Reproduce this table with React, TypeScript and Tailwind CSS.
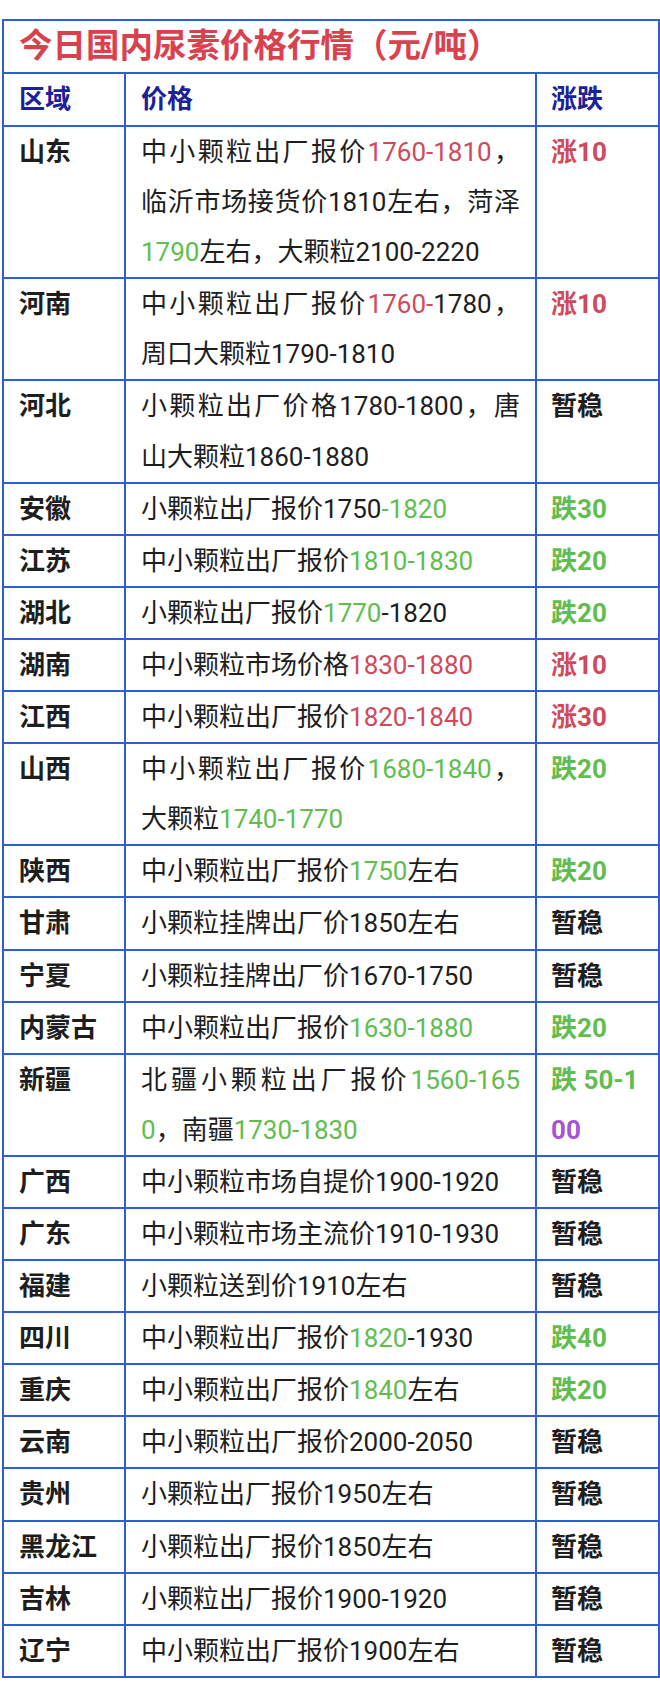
type Seg = [string, ("r" | "g" | "p")?];
type Line = Seg[];

interface Row {
  region: string;
  price: Line[];
  change: Line[];
}

const tone: Record<string, string> = {
  r: "text-[#d04a5c]",
  g: "text-[#62bd4f]",
  p: "text-[#a653d6]",
};

const rows: Row[] = [
  {
    region: "山东",
    price: [
      [["中小颗粒出厂报价"], ["1760-1810", "r"], ["，"]],
      [["临沂市场接货价1810左右，菏泽"]],
      [["1790", "g"], ["左右，大颗粒2100-2220"]],
    ],
    change: [[["涨10", "r"]]],
  },
  {
    region: "河南",
    price: [
      [["中小颗粒出厂报价"], ["1760-", "r"], ["1780，"]],
      [["周口大颗粒1790-1810"]],
    ],
    change: [[["涨10", "r"]]],
  },
  {
    region: "河北",
    price: [[["小颗粒出厂价格1780-1800，唐"]], [["山大颗粒1860-1880"]]],
    change: [[["暂稳"]]],
  },
  {
    region: "安徽",
    price: [[["小颗粒出厂报价1750"], ["-1820", "g"]]],
    change: [[["跌30", "g"]]],
  },
  {
    region: "江苏",
    price: [[["中小颗粒出厂报价"], ["1810-1830", "g"]]],
    change: [[["跌20", "g"]]],
  },
  {
    region: "湖北",
    price: [[["小颗粒出厂报价"], ["1770", "g"], ["-1820"]]],
    change: [[["跌20", "g"]]],
  },
  {
    region: "湖南",
    price: [[["中小颗粒市场价格"], ["1830-1880", "r"]]],
    change: [[["涨10", "r"]]],
  },
  {
    region: "江西",
    price: [[["中小颗粒出厂报价"], ["1820-1840", "r"]]],
    change: [[["涨30", "r"]]],
  },
  {
    region: "山西",
    price: [
      [["中小颗粒出厂报价"], ["1680-1840", "g"], ["，"]],
      [["大颗粒"], ["1740-1770", "g"]],
    ],
    change: [[["跌20", "g"]]],
  },
  {
    region: "陕西",
    price: [[["中小颗粒出厂报价"], ["1750", "g"], ["左右"]]],
    change: [[["跌20", "g"]]],
  },
  {
    region: "甘肃",
    price: [[["小颗粒挂牌出厂价1850左右"]]],
    change: [[["暂稳"]]],
  },
  {
    region: "宁夏",
    price: [[["小颗粒挂牌出厂价1670-1750"]]],
    change: [[["暂稳"]]],
  },
  {
    region: "内蒙古",
    price: [[["中小颗粒出厂报价"], ["1630-1880", "g"]]],
    change: [[["跌20", "g"]]],
  },
  {
    region: "新疆",
    price: [
      [["北疆小颗粒出厂报价"], ["1560-165", "g"]],
      [["0", "g"], ["，南疆"], ["1730-1830", "g"]],
    ],
    change: [[["跌 50-1", "g"]], [["00", "p"]]],
  },
  {
    region: "广西",
    price: [[["中小颗粒市场自提价1900-1920"]]],
    change: [[["暂稳"]]],
  },
  {
    region: "广东",
    price: [[["中小颗粒市场主流价1910-1930"]]],
    change: [[["暂稳"]]],
  },
  {
    region: "福建",
    price: [[["小颗粒送到价1910左右"]]],
    change: [[["暂稳"]]],
  },
  {
    region: "四川",
    price: [[["中小颗粒出厂报价"], ["1820", "g"], ["-1930"]]],
    change: [[["跌40", "g"]]],
  },
  {
    region: "重庆",
    price: [[["中小颗粒出厂报价"], ["1840", "g"], ["左右"]]],
    change: [[["跌20", "g"]]],
  },
  {
    region: "云南",
    price: [[["中小颗粒出厂报价2000-2050"]]],
    change: [[["暂稳"]]],
  },
  {
    region: "贵州",
    price: [[["小颗粒出厂报价1950左右"]]],
    change: [[["暂稳"]]],
  },
  {
    region: "黑龙江",
    price: [[["小颗粒出厂报价1850左右"]]],
    change: [[["暂稳"]]],
  },
  {
    region: "吉林",
    price: [[["小颗粒出厂报价1900-1920"]]],
    change: [[["暂稳"]]],
  },
  {
    region: "辽宁",
    price: [[["中小颗粒出厂报价1900左右"]]],
    change: [[["暂稳"]]],
  },
];

function Lines({ lines, justify }: { lines: Line[]; justify?: boolean }) {
  return (
    <>
      {lines.map((line, i) => (
        <span
          key={i}
          className={
            justify && i < lines.length - 1
              ? "block text-justify [text-align-last:justify]"
              : "block"
          }
        >
          {line.map(([text, c], j) => (
            <span key={j} className={c ? tone[c] : undefined}>
              {text}
            </span>
          ))}
        </span>
      ))}
    </>
  );
}

export default function App() {
  return (
    <div
      className="min-h-[1704px] bg-white pt-[19px] pl-[2px]"
      style={{ fontFamily: 'Roboto, "Noto Sans CJK SC", sans-serif' }}
    >
      <div className="w-[658px] border-2 border-[#2f5fd0]">
        {/* Title */}
        <div className="h-[53px] border-b-2 border-[#2f5fd0] pl-[15px] text-[33.5px] font-bold leading-[49px] text-[#d9414f]">
          今日国内尿素价格行情（元/吨）
        </div>

        {/* Header */}
        <div className="grid grid-cols-[122px_411px_1fr] border-b-2 border-[#2f5fd0] text-[26px] font-bold leading-[51px] text-[#1b2199]">
          <div className="border-r-2 border-[#2f5fd0] pl-[15px]">区域</div>
          <div className="border-r-2 border-[#2f5fd0] pl-[15px]">价格</div>
          <div className="pl-[14px]">涨跌</div>
        </div>

        {/* Rows */}
        {rows.map((row, i) => (
          <div
            key={row.region}
            className={`grid grid-cols-[122px_411px_1fr] text-[26px] leading-[50.1px] text-[#1e1e1e] ${
              i < rows.length - 1 ? "border-b-2 border-[#2f5fd0]" : ""
            }`}
          >
            <div className="border-r-2 border-[#2f5fd0] pl-[15px] font-bold">
              {row.region}
            </div>
            <div className="border-r-2 border-[#2f5fd0] pl-[15px] pr-[15px]">
              <Lines lines={row.price} justify />
            </div>
            <div className="pl-[14px] font-bold">
              <Lines lines={row.change} />
            </div>
          </div>
        ))}
      </div>
    </div>
  );
}
